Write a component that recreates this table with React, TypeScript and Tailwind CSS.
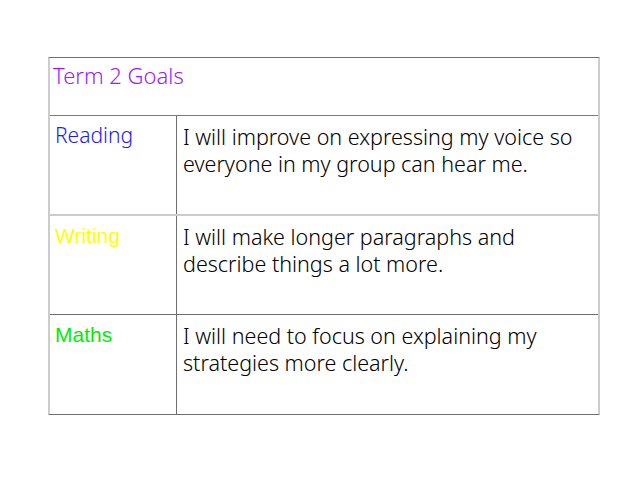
const rows = [
  {
    subject: 'Reading',
    color: 'text-[#1a1aff]',
    hand: true,
    goal: 'I will improve on expressing my voice so everyone in my group can hear me.',
    border: 'h-[100px] border-b-2 border-[#cccccc]',
  },
  {
    subject: 'Writing',
    color: 'text-[#ffff00]',
    hand: false,
    goal: 'I will make longer paragraphs and describe things a lot more.',
    border: 'h-[99px] border-b border-[#6f6f6f]',
  },
  {
    subject: 'Maths',
    color: 'text-[#00ee00]',
    hand: false,
    goal: 'I will need to focus on explaining my strategies more clearly.',
    border: 'h-[99px]',
  },
];

const hand = "font-['Noto_Sans',sans-serif] font-light";

export default function App() {
  return (
    <div className="w-[640px] h-[480px] bg-white pt-[57px] pl-[48px]">
      <div className="w-[552px] border-t border-b border-t-[#6f6f6f] border-b-[#6f6f6f] border-x-2 border-x-[#cccccc]">
        <div className={`h-[58px] border-b border-[#7a7a7a] px-[3px] pt-[4px] text-[22px] leading-[27px] text-[#9b1aff] ${hand}`}>
          Term 2 Goals
        </div>
        {rows.map((r) => (
          <div key={r.subject} className={`grid grid-cols-[127px_1fr] ${r.border}`}>
            <div
              className={`border-r border-[#6f6f6f] pl-[5px] pt-[6px] leading-[27px] text-[21px] ${r.color} ${
                r.hand ? hand : "font-['Liberation_Sans',Arial,sans-serif]"
              }`}
            >
              {r.subject}
            </div>
            <div className={`pl-[6px] pr-[12px] pt-[7px] text-[21.5px] leading-[27px] text-black ${hand}`}>
              {r.goal}
            </div>
          </div>
        ))}
      </div>
    </div>
  );
}
